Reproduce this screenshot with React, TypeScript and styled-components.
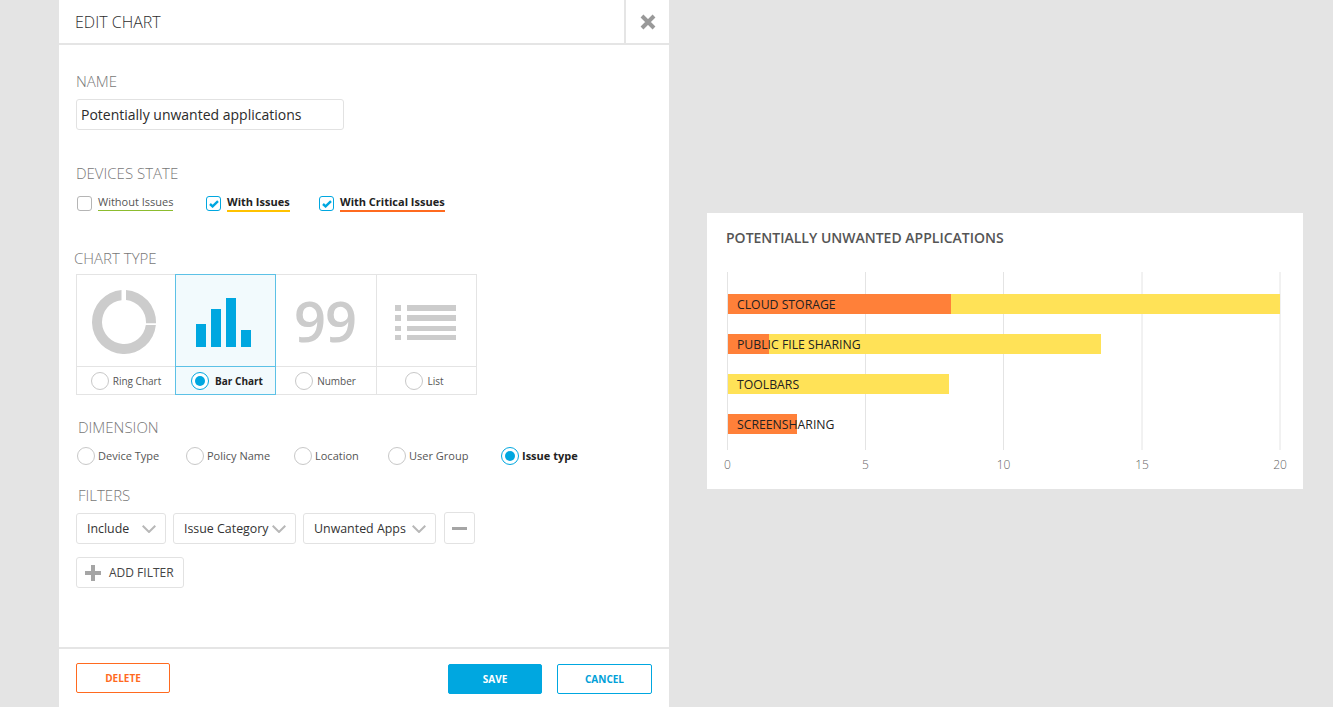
import styled, { createGlobalStyle } from "styled-components";
import { ReactNode } from "react";

const Global = createGlobalStyle`
  html, body { margin: 0; padding: 0; height: 100%; }
  body {
    background: #e4e4e4;
    font-family: "Open Sans", "Liberation Sans", sans-serif;
    color: #333;
    overflow: hidden;
  }
`;

const Page = styled.div`
  display: flex;
  align-items: flex-start;
  width: 1333px;
  height: 707px;
  padding-left: 59px;
  box-sizing: border-box;
`;

const Panel = styled.div`
  display: flex;
  flex-direction: column;
  width: 610px;
  height: 707px;
  background: #fff;
  flex-shrink: 0;
`;

const Header = styled.div`
  display: flex;
  justify-content: space-between;
  height: 43px;
  border-bottom: 2px solid #e5e5e5;
`;

const Title = styled.div`
  padding: 11px 0 0 16px;
  font-size: 16px;
  line-height: 22px;
  font-weight: 300;
  color: #2e2e2e;
`;

const CloseBox = styled.div`
  display: flex;
  align-items: center;
  justify-content: center;
  width: 43px;
  border-left: 2px solid #e5e5e5;
`;

const Body = styled.div`
  flex: 1;
  padding: 0 17px;
`;

const Label = styled.div<{ $top: number; $shift?: number }>`
  margin: ${(p) => p.$top}px 0 0 ${(p) => p.$shift ?? 0}px;
  font-size: 15px;
  line-height: 18px;
  font-weight: 300;
  color: #777;
`;

const NameInput = styled.div`
  width: 268px;
  height: 31px;
  margin-top: 9px;
  padding-left: 4px;
  box-sizing: border-box;
  border: 1px solid #e2e2e2;
  border-radius: 3px;
  font-size: 14px;
  line-height: 29px;
  color: #2b2b2b;
`;

const CheckRow = styled.div`
  display: flex;
  height: 20px;
  margin-top: 13px;
  padding-left: 1px;
`;

const CheckItem = styled.div<{ $width: number }>`
  display: flex;
  width: ${(p) => p.$width}px;
  gap: 6px;
`;

const CheckBox = styled.div<{ $on?: boolean }>`
  display: flex;
  align-items: center;
  justify-content: center;
  width: 15px;
  height: 15px;
  box-sizing: border-box;
  margin-top: 1px;
  border: 1px solid ${(p) => (p.$on ? "#00a7e0" : "#b5b5b5")};
  border-radius: 3px;
`;

const CheckText = styled.div<{ $color: string; $bold?: boolean }>`
  height: 15px;
  font-size: 11px;
  line-height: 13px;
  font-weight: ${(p) => (p.$bold ? 700 : 400)};
  color: ${(p) => (p.$bold ? "#222" : "#555")};
  border-bottom: ${(p) => (p.$bold ? 2 : 1)}px solid ${(p) => p.$color};
`;

const TypeGrid = styled.div`
  display: flex;
  width: 401px;
  height: 121px;
  margin-top: 7px;
`;

const TypeCell = styled.div<{ $width: number; $on?: boolean }>`
  display: flex;
  flex-direction: column;
  width: ${(p) => p.$width}px;
  box-sizing: border-box;
  margin-left: -1px;
  border: 1px solid ${(p) => (p.$on ? "#5cc1e6" : "#e4e4e4")};
  background: ${(p) => (p.$on ? "#f2fafd" : "#fff")};
  position: relative;
  z-index: ${(p) => (p.$on ? 1 : 0)};
  &:first-child { margin-left: 0; }
`;

const TypeArt = styled.div<{ $right: number; $top: number }>`
  display: flex;
  align-items: center;
  justify-content: center;
  height: 91px;
  box-sizing: border-box;
  padding: ${(p) => p.$top}px ${(p) => p.$right}px 0 0;
`;

const BigNumber = styled.div`
  font-size: 56px;
  line-height: 87px;
  font-weight: 600;
  letter-spacing: -1px;
  color: #cccccc;
`;

const TypeFoot = styled.div<{ $on?: boolean; $left?: number; $right?: number }>`
  display: flex;
  align-items: center;
  justify-content: center;
  flex: 1;
  gap: ${(p) => (p.$on ? 6 : 4)}px;
  padding: 0 ${(p) => p.$right ?? 0}px 0 ${(p) => p.$left ?? 0}px;
  border-top: 1px solid ${(p) => (p.$on ? "#5cc1e6" : "#e4e4e4")};
`;

const RadioCircle = styled.div<{ $on?: boolean }>`
  display: flex;
  align-items: center;
  justify-content: center;
  width: 18px;
  height: 18px;
  box-sizing: border-box;
  flex-shrink: 0;
  border-radius: 50%;
  border: ${(p) => (p.$on ? 1.5 : 1)}px solid ${(p) => (p.$on ? "#00a7e0" : "#c8c8c8")};
  background: #fff;
  &::after {
    content: "";
    display: ${(p) => (p.$on ? "block" : "none")};
    width: 10px;
    height: 10px;
    border-radius: 50%;
    background: #00a7e0;
  }
`;

const RadioText = styled.span<{ $on?: boolean; $size: number }>`
  font-size: ${(p) => p.$size}px;
  line-height: 14px;
  font-weight: ${(p) => (p.$on ? 700 : 400)};
  color: ${(p) => (p.$on ? "#222" : "#555")};
`;

const DimRow = styled.div`
  display: flex;
  height: 18px;
  margin-top: 11px;
  padding-left: 1px;
`;

const DimItem = styled.div<{ $width: number }>`
  display: flex;
  align-items: center;
  gap: 3px;
  width: ${(p) => p.$width}px;
`;

const FilterRow = styled.div`
  display: flex;
  gap: 7px;
  margin-top: 9px;
`;

const Select = styled.div<{ $width: number }>`
  display: flex;
  align-items: center;
  justify-content: space-between;
  width: ${(p) => p.$width}px;
  height: 31px;
  box-sizing: border-box;
  padding: 0 9px 0 10px;
  border: 1px solid #e2e2e2;
  border-radius: 3px;
  font-size: 12.4px;
  color: #333;
  white-space: nowrap;
`;

const MinusButton = styled.div`
  display: flex;
  align-items: center;
  justify-content: center;
  width: 31px;
  height: 32px;
  margin: -1px 0 0 1px;
  box-sizing: border-box;
  border: 1px solid #e2e2e2;
  border-radius: 3px;
  &::after {
    content: "";
    width: 15px;
    height: 3px;
    background: #a5a5a5;
  }
`;

const AddFilter = styled.div`
  display: flex;
  align-items: center;
  gap: 8px;
  width: 108px;
  height: 31px;
  margin-top: 13px;
  padding-left: 8px;
  box-sizing: border-box;
  border: 1px solid #e2e2e2;
  border-radius: 3px;
  font-size: 12px;
  color: #444;
`;

const Footer = styled.div`
  display: flex;
  height: 60px;
  box-sizing: border-box;
  border-top: 2px solid #e5e5e5;
  padding: 14px 17px 0;
`;

const ActionButton = styled.div<{ $kind: "delete" | "save" | "cancel" }>`
  display: flex;
  align-items: center;
  justify-content: center;
  width: ${(p) => (p.$kind === "cancel" ? 95 : 94)}px;
  height: 30px;
  margin-top: ${(p) => (p.$kind === "delete" ? 0 : 1)}px;
  margin-left: ${(p) => (p.$kind === "save" ? "auto" : p.$kind === "cancel" ? "15px" : 0)};
  box-sizing: border-box;
  border-radius: 2px;
  font-size: 10px;
  font-weight: 700;
  border: 1px solid ${(p) => (p.$kind === "delete" ? "#ff6a1f" : "#00a7e0")};
  background: ${(p) => (p.$kind === "save" ? "#00a7e0" : "#fff")};
  color: ${(p) => (p.$kind === "delete" ? "#ff6a1f" : p.$kind === "save" ? "#fff" : "#00a0d8")};
`;

const ChartCard = styled.div`
  width: 596px;
  height: 276px;
  margin: 213px 0 0 38px;
  background: #fff;
  flex-shrink: 0;
`;

const ChartTitle = styled.div`
  padding: 15px 0 0 19px;
  height: 44px;
  font-size: 14px;
  line-height: 20px;
  font-weight: 600;
  color: #555;
`;

const ChartSvg = styled.svg`
  display: block;
  font-family: "Open Sans", "Liberation Sans", sans-serif;
`;

const Check = () => (
  <svg width="10" height="8" viewBox="0 0 10 8">
    <path d="M1 4 3.6 6.4 9 1.2" fill="none" stroke="#00a7e0" strokeWidth="2.4" />
  </svg>
);

const Chevron = () => (
  <svg width="14" height="8" viewBox="0 0 14 8">
    <path d="M.7 .8 7 7 13.3 .8" fill="none" stroke="#b8b8b8" strokeWidth="2" />
  </svg>
);

const Radio = ({ on, size, children }: { on?: boolean; size: number; children: ReactNode }) => (
  <>
    <RadioCircle $on={on} />
    <RadioText $on={on} $size={size}>{children}</RadioText>
  </>
);

const gridX = [20.5, 158.5, 296.5, 435, 573];
const ticks = ["0", "5", "10", "15", "20"];
const bars = [
  { y: 22, label: "CLOUD STORAGE", orange: 223, yellow: 552 },
  { y: 62, label: "PUBLIC FILE SHARING", orange: 41, yellow: 373 },
  { y: 102, label: "TOOLBARS", orange: 0, yellow: 221 },
  { y: 142, label: "SCREENSHARING", orange: 69, yellow: 0 },
];

const BarChart = () => (
  <ChartSvg width="596" height="217" viewBox="0 0 596 217">
    {gridX.map((x) => (
      <line key={x} x1={x} x2={x} y1="0" y2="178" stroke="#e4e4e4" strokeWidth="1" />
    ))}
    {bars.map((b) => (
      <g key={b.label}>
        {b.yellow > 0 && <rect x="21" y={b.y} width={b.yellow} height="20" fill="#ffe257" />}
        {b.orange > 0 && <rect x="21" y={b.y} width={b.orange} height="20" fill="#ff8039" />}
        <text x="30" y={b.y + 15} fontSize="12.25" fill="#222">
          {b.label}
        </text>
      </g>
    ))}
    {ticks.map((t, i) => (
      <text key={t} x={gridX[i]} y="197" fontSize="12" fontWeight="300" fill="#666" textAnchor="middle">
        {t}
      </text>
    ))}
  </ChartSvg>
);

export default function App() {
  return (
    <Page>
      <Global />
      <Panel>
        <Header>
          <Title>EDIT CHART</Title>
          <CloseBox>
            <svg width="16" height="16" viewBox="0 0 16 16">
              <path d="M2 2l12 12M14 2L2 14" stroke="#999" strokeWidth="4" />
            </svg>
          </CloseBox>
        </Header>
        <Body>
          <Label $top={27}>NAME</Label>
          <NameInput>Potentially unwanted applications</NameInput>

          <Label $top={34}>DEVICES STATE</Label>
          <CheckRow>
            <CheckItem $width={129}>
              <CheckBox />
              <CheckText $color="#8cbc2e">Without Issues</CheckText>
            </CheckItem>
            <CheckItem $width={113}>
              <CheckBox $on><Check /></CheckBox>
              <CheckText $color="#ffc200" $bold>With Issues</CheckText>
            </CheckItem>
            <CheckItem $width={140}>
              <CheckBox $on><Check /></CheckBox>
              <CheckText $color="#ff6a1f" $bold>With Critical Issues</CheckText>
            </CheckItem>
          </CheckRow>

          <Label $top={34} $shift={-2}>CHART TYPE</Label>
          <TypeGrid>
            <TypeCell $width={100}>
              <TypeArt $right={4} $top={3}>
                <svg width="64" height="64" viewBox="0 0 64 64">
                  <path
                    d="M29.5 .1A32 32 0 1 0 63.86 35H53.8A22 22 0 1 1 29.5 10.14ZM34 .06A32 32 0 0 1 63.97 33.3H53.96A22 22 0 0 0 34 10.1Z"
                    fill="#cccccc"
                  />
                </svg>
              </TypeArt>
              <TypeFoot><Radio size={10}>Ring Chart</Radio></TypeFoot>
            </TypeCell>
            <TypeCell $width={101} $on>
              <TypeArt $right={5} $top={4}>
                <svg width="55" height="49" viewBox="0 0 55 49">
                  <path d="M0 26h10v23H0zM15 11h10v38H15zM30 0h10v49H30zM45 32h10v17H45z" fill="#00a7e0" />
                </svg>
              </TypeArt>
              <TypeFoot $on $left={3}><Radio on size={10}>Bar Chart</Radio></TypeFoot>
            </TypeCell>
            <TypeCell $width={102}>
              <TypeArt $right={2} $top={0}><BigNumber>99</BigNumber></TypeArt>
              <TypeFoot $right={1}><Radio size={10}>Number</Radio></TypeFoot>
            </TypeCell>
            <TypeCell $width={101}>
              <TypeArt $right={2} $top={4}>
                <svg width="62" height="36" viewBox="0 0 62 36">
                  <path
                    d="M0 0h6v6H0zM12 0h49v6H12zM0 10h6v6H0zM12 10h49v6H12zM0 21h6v5H0zM12 21h49v5H12zM0 30h6v5H0zM12 30h49v5H12z"
                    fill="#cccccc"
                  />
                </svg>
              </TypeArt>
              <TypeFoot $right={4}><Radio size={10}>List</Radio></TypeFoot>
            </TypeCell>
          </TypeGrid>

          <Label $top={23} $shift={2}>DIMENSION</Label>
          <DimRow>
            <DimItem $width={109}><Radio size={11}>Device Type</Radio></DimItem>
            <DimItem $width={108}><Radio size={11}>Policy Name</Radio></DimItem>
            <DimItem $width={94}><Radio size={11}>Location</Radio></DimItem>
            <DimItem $width={113}><Radio size={11}>User Group</Radio></DimItem>
            <DimItem $width={90}><Radio on size={11}>Issue type</Radio></DimItem>
          </DimRow>

          <Label $top={21} $shift={2}>FILTERS</Label>
          <FilterRow>
            <Select $width={90}>Include<Chevron /></Select>
            <Select $width={123}>Issue Category<Chevron /></Select>
            <Select $width={133}>Unwanted Apps<Chevron /></Select>
            <MinusButton />
          </FilterRow>
          <AddFilter>
            <svg width="16" height="16" viewBox="0 0 16 16">
              <path d="M6 0h4v6h6v4h-6v6H6v-6H0V6h6z" fill="#a5a5a5" />
            </svg>
            ADD FILTER
          </AddFilter>
        </Body>
        <Footer>
          <ActionButton $kind="delete">DELETE</ActionButton>
          <ActionButton $kind="save">SAVE</ActionButton>
          <ActionButton $kind="cancel">CANCEL</ActionButton>
        </Footer>
      </Panel>
      <ChartCard>
        <ChartTitle>POTENTIALLY UNWANTED APPLICATIONS</ChartTitle>
        <BarChart />
      </ChartCard>
    </Page>
  );
}
